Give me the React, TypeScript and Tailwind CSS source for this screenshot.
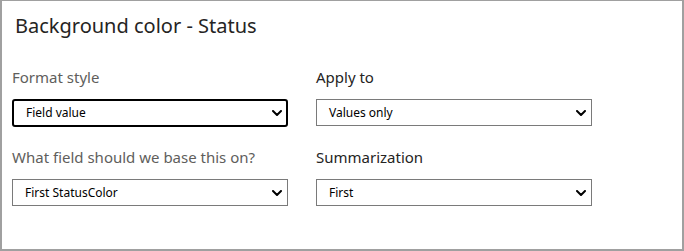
import React from "react";

function Chevron() {
  return (
    <svg width="10" height="6" viewBox="0 0 10 6" className="shrink-0">
      <path d="M1 1 L5 5 L9 1" fill="none" stroke="#000" strokeWidth="2" strokeLinecap="round" strokeLinejoin="round" />
    </svg>
  );
}

function Select({ value, focused }: { value: string; focused?: boolean }) {
  return (
    <div
      className={
        focused
          ? "flex h-[28px] w-[276px] items-center justify-between rounded-[3px] border-2 border-black pl-[12px] pr-[4px]"
          : "flex h-[27px] w-[276px] items-center justify-between border border-[#7a7a7a] pl-[12px] pr-[5px]"
      }
    >
      <span className="text-[12px] leading-none text-black">{value}</span>
      <Chevron />
    </div>
  );
}

function Field({ label, value, dark, focused }: { label: string; value: string; dark?: boolean; focused?: boolean }) {
  return (
    <div className="flex flex-col">
      <div className={"h-[22px] text-[15px] leading-[22px] " + (dark ? "text-[#252423]" : "text-[#605e5c]")}>{label}</div>
      <div className="mt-[11px]">
        <Select value={value} focused={focused} />
      </div>
    </div>
  );
}

export default function App() {
  return (
    <div
      className="h-[251px] w-[684px] border-x-2 border-b-2 border-t border-[#a0a0a0] bg-white"
      style={{ fontFamily: '"Noto Sans", "Open Sans", sans-serif' }}
    >
      <div className="pl-[10px] pt-[11px]">
        <div className="pl-[3px] text-[20px] leading-[28px] text-[#252423]">Background color - Status</div>
        <div className="mt-[26px] grid grid-cols-[276px_276px] gap-x-[28px] gap-y-[19px]">
          <Field label="Format style" value="Field value" focused />
          <Field label="Apply to" value="Values only" dark />
          <Field label="What field should we base this on?" value="First StatusColor" />
          <Field label="Summarization" value="First" dark />
        </div>
      </div>
    </div>
  );
}
